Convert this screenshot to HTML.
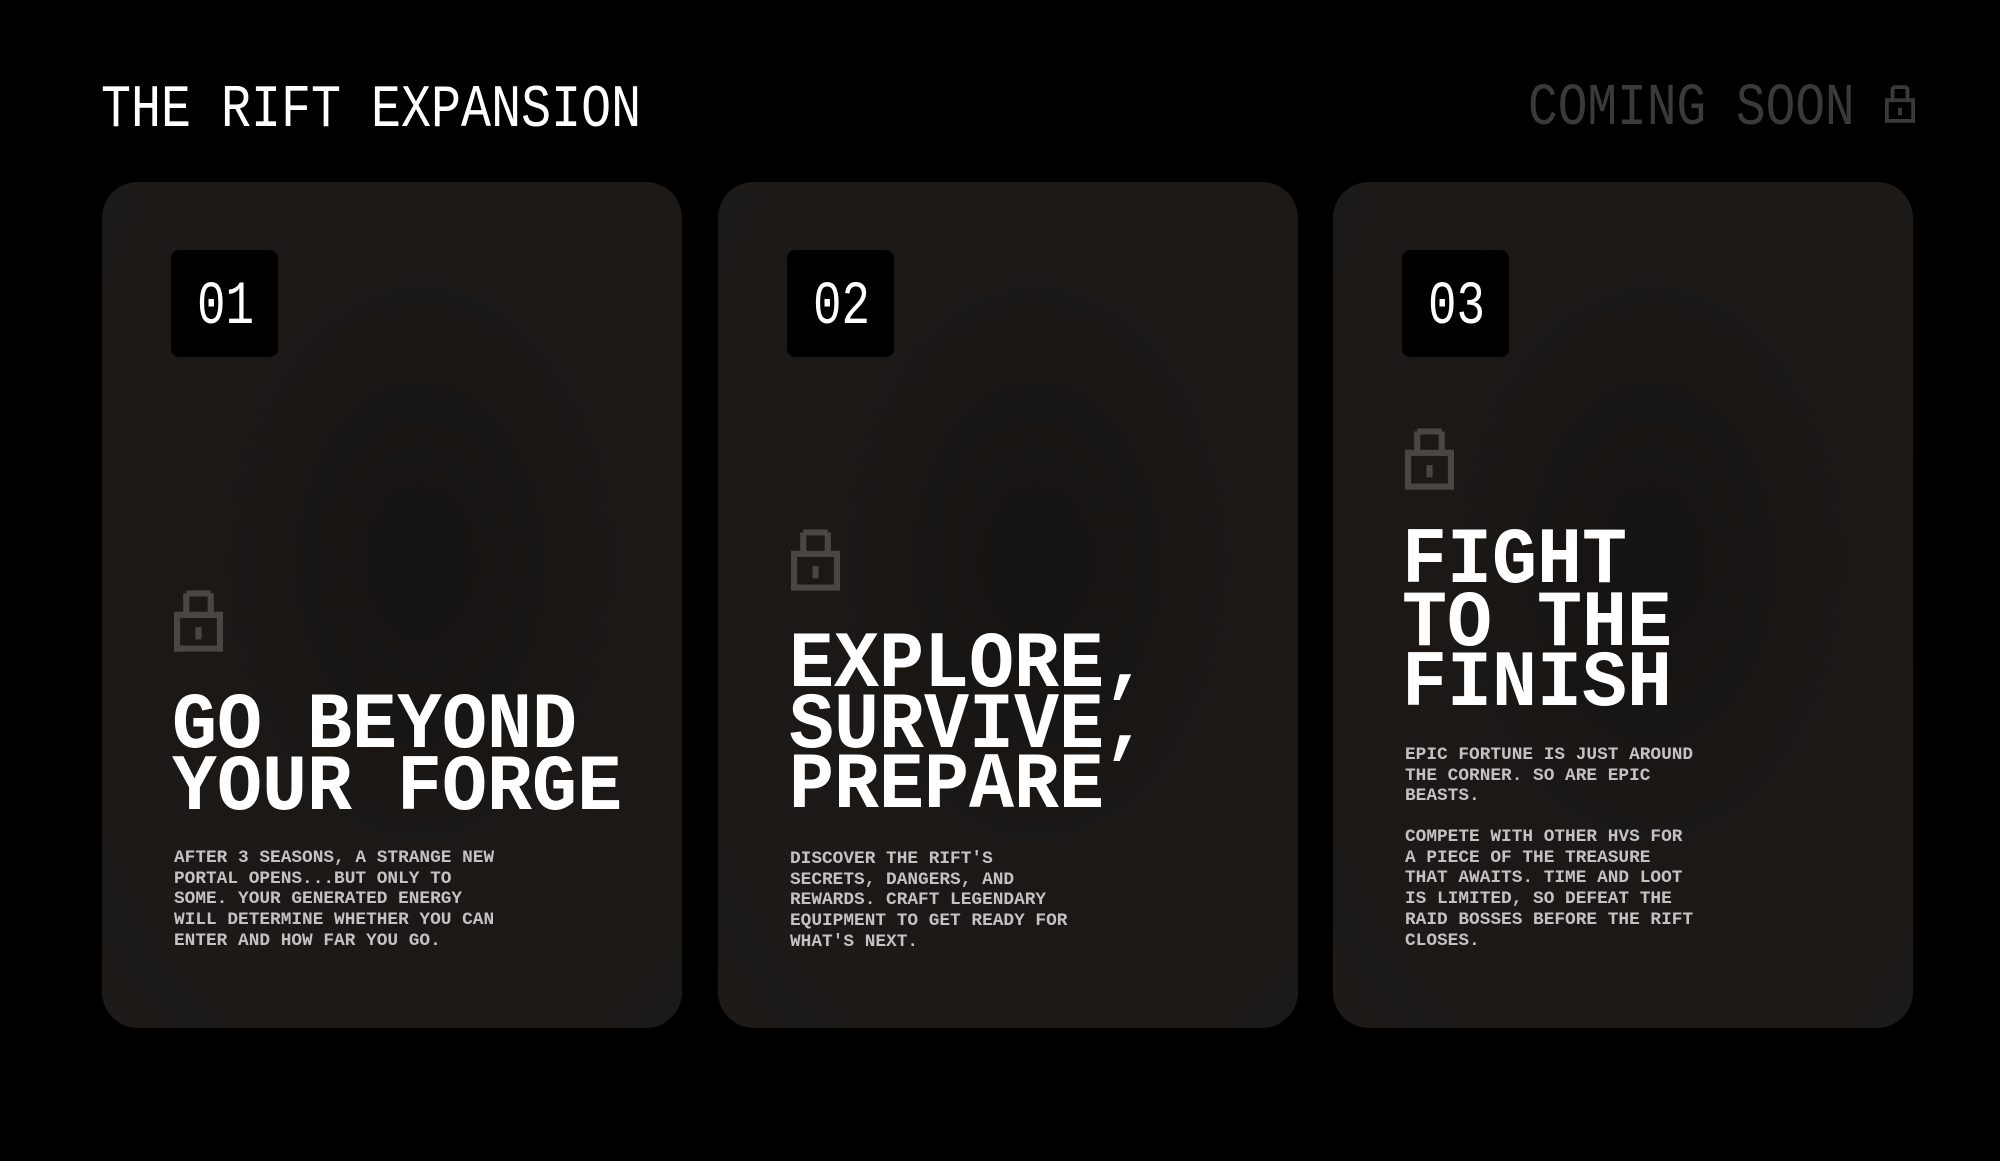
<!DOCTYPE html>
<html><head><meta charset="utf-8"><style>
*{margin:0;padding:0;box-sizing:border-box}
html,body{width:2000px;height:1161px;background:#000;overflow:hidden}
body{position:relative;font-family:"Liberation Mono","DejaVu Sans Mono",monospace}
.abs{position:absolute;white-space:pre;transform-origin:0 0;line-height:1}
.card{position:absolute;top:182px;width:580px;height:846px;border-radius:36px;
background:radial-gradient(ellipse at 55% 45%,#151311 0%,#1b1816 45%,#1d1a18 100%)}
.num{position:absolute;top:250px;width:107px;height:107px;background:#000;border-radius:8px}
.h{font-size:75px;font-weight:bold;color:#fff;transform:scaleY(1.07)}
.body{position:absolute;font-size:17.8px;line-height:20.7px;font-weight:bold;color:#c4c2c0;white-space:pre}
.d{font-size:47.5px;color:#fff;transform:scaleY(1.28)}
</style></head><body>
<div class="abs" style="left:101px;top:81px;font-size:50px;color:#fff;transform:scaleY(1.21)">THE RIFT EXPANSION</div>
<div class="abs" style="left:1528px;top:80px;font-size:49.5px;color:#3a3a3a;transform:scaleY(1.19)">COMING SOON</div>
<svg style="position:absolute;left:1885px;top:85px" width="30" height="38" viewBox="0 0 16 20"><g fill="#3a3a3a"><rect x="4" y="0" width="8" height="2"/><rect x="3" y="1" width="2" height="7"/><rect x="11" y="1" width="2" height="7"/><rect x="0" y="7" width="16" height="2"/><rect x="0" y="7" width="2" height="13"/><rect x="14" y="7" width="2" height="13"/><rect x="0" y="18" width="16" height="2"/><rect x="7" y="12" width="2" height="4"/></g></svg>

<div class="card" style="left:102px"></div>
<div class="card" style="left:718px"></div>
<div class="card" style="left:1333px"></div>

<div class="num" style="left:171px"></div>
<div class="num" style="left:787px"></div>
<div class="num" style="left:1402px"></div>
<div class="abs d" style="left:197px;top:278px">01</div>
<div class="abs d" style="left:813px;top:278px">02</div>
<div class="abs d" style="left:1428px;top:278px">03</div>

<svg style="position:absolute;left:174px;top:590px" width="49" height="62" viewBox="0 0 16 20"><g fill="#4a4644"><rect x="4" y="0" width="8" height="2"/><rect x="3" y="1" width="2" height="7"/><rect x="11" y="1" width="2" height="7"/><rect x="0" y="7" width="16" height="2"/><rect x="0" y="7" width="2" height="13"/><rect x="14" y="7" width="2" height="13"/><rect x="0" y="18" width="16" height="2"/><rect x="7" y="12" width="2" height="4"/></g></svg>
<svg style="position:absolute;left:791px;top:529px" width="49" height="62" viewBox="0 0 16 20"><g fill="#4a4644"><rect x="4" y="0" width="8" height="2"/><rect x="3" y="1" width="2" height="7"/><rect x="11" y="1" width="2" height="7"/><rect x="0" y="7" width="16" height="2"/><rect x="0" y="7" width="2" height="13"/><rect x="14" y="7" width="2" height="13"/><rect x="0" y="18" width="16" height="2"/><rect x="7" y="12" width="2" height="4"/></g></svg>
<svg style="position:absolute;left:1405px;top:428px" width="49" height="62" viewBox="0 0 16 20"><g fill="#4a4644"><rect x="4" y="0" width="8" height="2"/><rect x="3" y="1" width="2" height="7"/><rect x="11" y="1" width="2" height="7"/><rect x="0" y="7" width="16" height="2"/><rect x="0" y="7" width="2" height="13"/><rect x="14" y="7" width="2" height="13"/><rect x="0" y="18" width="16" height="2"/><rect x="7" y="12" width="2" height="4"/></g></svg>

<div class="abs h" style="left:172px;top:686px">GO BEYOND</div>
<div class="abs h" style="left:172px;top:748px">YOUR FORGE</div>
<div class="abs h" style="left:789px;top:625px">EXPLORE,</div>
<div class="abs h" style="left:789px;top:686px">SURVIVE,</div>
<div class="abs h" style="left:789px;top:746px">PREPARE</div>
<div class="abs h" style="left:1402px;top:521px">FIGHT</div>
<div class="abs h" style="left:1402px;top:584px">TO THE</div>
<div class="abs h" style="left:1402px;top:644px">FINISH</div>

<div class="body" style="left:174px;top:848px">AFTER 3 SEASONS, A STRANGE NEW
PORTAL OPENS...BUT ONLY TO
SOME. YOUR GENERATED ENERGY
WILL DETERMINE WHETHER YOU CAN
ENTER AND HOW FAR YOU GO.</div>
<div class="body" style="left:790px;top:849px">DISCOVER THE RIFT'S
SECRETS, DANGERS, AND
REWARDS. CRAFT LEGENDARY
EQUIPMENT TO GET READY FOR
WHAT'S NEXT.</div>
<div class="body" style="left:1405px;top:745px">EPIC FORTUNE IS JUST AROUND
THE CORNER. SO ARE EPIC
BEASTS.</div>
<div class="body" style="left:1405px;top:827px">COMPETE WITH OTHER HVS FOR
A PIECE OF THE TREASURE
THAT AWAITS. TIME AND LOOT
IS LIMITED, SO DEFEAT THE
RAID BOSSES BEFORE THE RIFT
CLOSES.</div>
</body></html>
